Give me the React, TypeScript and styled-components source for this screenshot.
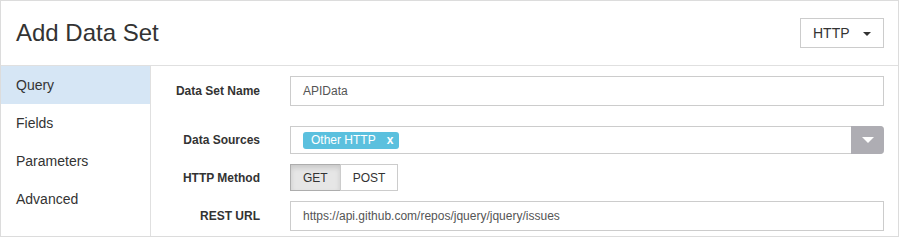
import React from "react";
import styled, { createGlobalStyle } from "styled-components";

const GlobalStyle = createGlobalStyle`
  html, body { margin: 0; padding: 0; background: #fff; }
  body { font-family: "Liberation Sans", Arial, sans-serif; color: #333; }
  * { box-sizing: border-box; }
`;

const Panel = styled.div`
  width: 899px;
  height: 237px;
  border: 1px solid #dcdcdc;
  background: #fff;
  display: flex;
  flex-direction: column;
  overflow: hidden;
`;

const Header = styled.div`
  height: 65px;
  flex: 0 0 65px;
  border-bottom: 1px solid #e0e0e0;
  display: flex;
  align-items: center;
  justify-content: space-between;
  padding: 0 14px 0 15px;
`;

const Title = styled.h1`
  margin: 0;
  font-size: 24px;
  font-weight: normal;
  color: #333;
`;

const DropButton = styled.button`
  height: 30px;
  width: 84px;
  border: 1px solid #ccc;
  background: #fff;
  font-family: inherit;
  font-size: 14px;
  color: #333;
  padding: 0 12px;
  display: flex;
  align-items: center;
  justify-content: space-between;
  border-radius: 0;
`;

const Caret = styled.span`
  width: 0;
  height: 0;
  border-left: 4px solid transparent;
  border-right: 4px solid transparent;
  border-top: 4px solid #333;
  margin-top: 1px;
`;

const Body = styled.div`
  flex: 1;
  display: flex;
  min-height: 0;
`;

const Sidebar = styled.nav`
  width: 150px;
  flex: 0 0 150px;
  border-right: 1px solid #e0e0e0;
  display: flex;
  flex-direction: column;
`;

const NavItem = styled.div<{ $active?: boolean }>`
  height: 38px;
  display: flex;
  align-items: center;
  padding-left: 15px;
  font-size: 14px;
  color: #333;
  background: ${(p) => (p.$active ? "#d6e6f5" : "transparent")};
`;

const Content = styled.div`
  flex: 1;
  padding: 10px 14px 0 0;
  display: flex;
  flex-direction: column;
`;

const FormRow = styled.div<{ $gap: number }>`
  display: grid;
  grid-template-columns: 139px 1fr;
  align-items: center;
  margin-bottom: ${(p) => p.$gap}px;
`;

const Label = styled.label`
  text-align: right;
  padding-right: 30px;
  font-size: 12px;
  font-weight: bold;
  color: #333;
`;

const TextInput = styled.div`
  height: 30px;
  border: 1px solid #ccc;
  padding: 0 12px;
  display: flex;
  align-items: center;
  font-size: 12px;
  color: #555;
`;

const MultiSelect = styled.div`
  height: 28px;
  border: 1px solid #ccc;
  border-right: none;
  border-radius: 0 4px 4px 0;
  display: flex;
  align-items: center;
  padding-left: 12px;
`;

const Tags = styled.div`
  flex: 1;
  display: flex;
  align-items: center;
`;

const Tag = styled.span`
  height: 17px;
  background: #5bc0de;
  color: #fff;
  border-radius: 3px;
  font-size: 12px;
  display: inline-flex;
  align-items: center;
  padding: 0 6px 0 8px;
`;

const TagClose = styled.span`
  font-weight: bold;
  margin-left: 11px;
`;

const SelectToggle = styled.div`
  width: 33px;
  height: 28px;
  margin-top: -1px;
  margin-bottom: -1px;
  background: #aeadb3;
  border-radius: 0 4px 4px 0;
  display: flex;
  align-items: center;
  justify-content: center;
`;

const WhiteTriangle = styled.span`
  width: 0;
  height: 0;
  border-left: 6px solid transparent;
  border-right: 6px solid transparent;
  border-top: 6px solid #fff;
`;

const ButtonGroup = styled.div`
  display: flex;
`;

const ToggleButton = styled.button<{ $active?: boolean }>`
  height: 27px;
  padding: 0 12px;
  font-family: inherit;
  font-size: 12px;
  color: #333;
  border: 1px solid ${(p) => (p.$active ? "#adadad" : "#ccc")};
  background: ${(p) => (p.$active ? "#e6e6e6" : "#fff")};
  box-shadow: ${(p) => (p.$active ? "inset 0 3px 5px rgba(0,0,0,0.125)" : "none")};
  border-radius: 0;
  & + & { margin-left: -1px; }
`;

const navItems = ["Query", "Fields", "Parameters", "Advanced"];

export default function App() {
  return (
    <>
      <GlobalStyle />
      <Panel>
        <Header>
          <Title>Add Data Set</Title>
          <DropButton>
            HTTP <Caret />
          </DropButton>
        </Header>
        <Body>
          <Sidebar>
            {navItems.map((n, i) => (
              <NavItem key={n} $active={i === 0}>
                {n}
              </NavItem>
            ))}
          </Sidebar>
          <Content>
            <FormRow $gap={20}>
              <Label>Data Set Name</Label>
              <TextInput>APIData</TextInput>
            </FormRow>
            <FormRow $gap={10}>
              <Label>Data Sources</Label>
              <MultiSelect>
                <Tags>
                  <Tag>
                    Other HTTP<TagClose>x</TagClose>
                  </Tag>
                </Tags>
                <SelectToggle>
                  <WhiteTriangle />
                </SelectToggle>
              </MultiSelect>
            </FormRow>
            <FormRow $gap={10}>
              <Label>HTTP Method</Label>
              <ButtonGroup>
                <ToggleButton $active>GET</ToggleButton>
                <ToggleButton>POST</ToggleButton>
              </ButtonGroup>
            </FormRow>
            <FormRow $gap={0}>
              <Label>REST URL</Label>
              <TextInput>https://api.github.com/repos/jquery/jquery/issues</TextInput>
            </FormRow>
          </Content>
        </Body>
      </Panel>
    </>
  );
}
